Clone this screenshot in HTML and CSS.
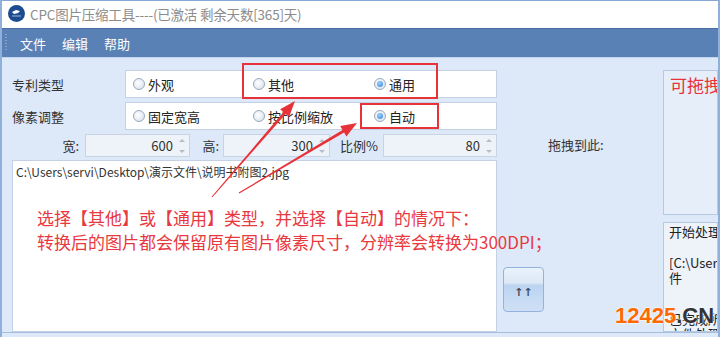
FILE: index.html
```html
<!DOCTYPE html>
<html lang="zh-CN">
<head>
    <meta charset="UTF-8">
    <title>CPC图片压缩工具</title>
    <link rel="stylesheet" href="styles.css">
</head>
<body>
    <div class="window">
        <div class="titlebar">
            <svg class="logo" width="17" height="17" viewBox="0 0 17 17">
                <circle cx="8.5" cy="8.5" r="8.5" fill="#1d4b8f"/>
                <path d="M4 7 L8 5 L12 6 L10 8 L6 9 Z" fill="#fff"/>
                <rect x="4" y="10.5" width="9" height="1" fill="#9fb8dd"/>
            </svg>
            <span class="title">CPC图片压缩工具----(已激活 剩余天数[365]天)</span>
        </div>
        <div class="menubar">
            <span class="grip"></span>
            <span class="menu">文件</span>
            <span class="menu">编辑</span>
            <span class="menu">帮助</span>
        </div>
        <div class="main">
            <div class="left">
                <div class="row">
                    <span class="label">专利类型</span>
                    <div class="group">
                        <label class="opt"><i class="radio"></i>外观</label>
                        <label class="opt"><i class="radio"></i>其他</label>
                        <label class="opt"><i class="radio on"></i>通用</label>
                    </div>
                </div>
                <div class="row">
                    <span class="label">像素调整</span>
                    <div class="group">
                        <label class="opt"><i class="radio"></i>固定宽高</label>
                        <label class="opt"><i class="radio"></i>按比例缩放</label>
                        <label class="opt"><i class="radio on"></i>自动</label>
                    </div>
                </div>
                <div class="sizes">
                    <span class="slabel w1">宽:</span>
                    <div class="spin s1">600<span class="arrows"></span></div>
                    <span class="slabel w2">高:</span>
                    <div class="spin s2">300<span class="arrows"></span></div>
                    <span class="slabel w3">比例%</span>
                    <div class="spin s3">80<span class="arrows"></span></div>
                </div>
                <div class="pathbox">C:\Users\servi\Desktop\演示文件\说明书附图2.jpg</div>
            </div>
            <div class="middle">
                <span class="drop-label">拖拽到此:</span>
                <button class="up">↑↑</button>
            </div>
            <div class="right">
                <div class="dropzone">可拖拽图片到此处</div>
                <div class="log">
                    <p>开始处理</p>
                    <p class="gap">[C:\Users\servi\Desktop\演示文</p>
                    <p>件</p>
                    <p class="gap2">已完成所有文件</p>
                    <p>文件处理完毕</p>
                </div>
            </div>
        </div>

        <div class="redbox box1"></div>
        <div class="redbox box2"></div>
        <svg class="pointers" width="720" height="337" viewBox="0 0 720 337">
            <polygon fill="#e8323a" points="209.6,196.7 281.5,112.1 278.1,109.2 293,101 287.1,117 283.7,114.1 210.4,197.3"/>
            <polygon fill="#e8323a" points="236.7,192.6 340.5,129.9 338.2,126 355,123 344.4,136.4 342.1,132.5 237.3,193.4"/>
        </svg>
        <div class="note">
            <p>选择【其他】或【通用】类型，并选择【自动】的情况下：</p>
            <p>转换后的图片都会保留原有图片像素尺寸，分辨率会转换为300DPI；</p>
        </div>
        <div class="watermark"><span class="num">12425</span>.CN</div>
    </div>
</body>
</html>
```

FILE: styles.css
```css
* {
    margin: 0;
    padding: 0;
    box-sizing: border-box;
}
body {
    width: 720px;
    height: 337px;
    overflow: hidden;
    background: #dde9f9;
    font-family: "Noto Sans CJK SC", "DejaVu Sans", sans-serif;
    color: #222;
}
.window {
    position: relative;
    width: 720px;
    height: 337px;
    border-left: 2px solid #8fb0da;
    border-right: 2px solid #8fb0da;
    overflow: hidden;
}
.titlebar {
    height: 28px;
    background: #fff;
    border-top: 1px solid #86a8d4;
    display: flex;
    align-items: center;
    padding-left: 6px;
    padding-bottom: 2px;
}
.title {
    margin-left: 5px;
    font-size: 13.5px;
    color: #8c8c8c;
    letter-spacing: -0.2px;
}
.menubar {
    height: 30px;
    background: #5a81b5;
    border-top: 1px solid #4a70a3;
    border-bottom: 1px solid #c3d6ef;
    display: flex;
    align-items: center;
    padding-left: 3px;
}
.grip {
    width: 2px;
    height: 18px;
    margin-right: 13px;
    background: repeating-linear-gradient(#8aa6cc 0 1px, transparent 1px 3px);
}
.menu {
    color: #fff;
    font-size: 13px;
    margin-right: 16px;
}
.main {
    height: 275px;
    display: grid;
    grid-template-columns: 485px 164px 57px;
    padding: 12px 0 0 10px;
    border-bottom: 1px solid #a5bee0;
}
.left {
    display: flex;
    flex-direction: column;
}
.row {
    display: flex;
    align-items: center;
    height: 28px;
    margin-bottom: 4px;
}
.label {
    width: 113px;
    font-size: 13px;
    color: #333;
}
.group {
    flex: 1;
    height: 28px;
    background: #fff;
    border: 1px solid #c3d1e3;
    display: grid;
    grid-template-columns: 120px 121px 1fr;
    align-items: center;
}
.opt {
    display: flex;
    align-items: center;
    padding-left: 7px;
    font-size: 13px;
    color: #222;
}
.radio {
    width: 12px;
    height: 12px;
    border-radius: 50%;
    border: 1px solid #9aa9bb;
    background: radial-gradient(circle at 40% 40%, #fff, #d3dfec);
    margin-right: 3px;
    position: relative;
}
.radio.on::after {
    content: '';
    position: absolute;
    left: 2px;
    top: 2px;
    width: 6px;
    height: 6px;
    border-radius: 50%;
    background: radial-gradient(circle at 40% 35%, #9fd0ff, #2f7fd6);
}
.sizes {
    display: flex;
    align-items: center;
    height: 23px;
    margin-bottom: 3px;
}
.slabel {
    font-size: 13px;
    color: #333;
    text-align: right;
}
.w1 { width: 73px; padding-right: 6px; }
.w2 { width: 33px; padding-right: 4px; }
.w3 { width: 53px; padding-right: 5px; }
.spin {
    height: 23px;
    background: #eef3f9;
    border: 1px solid #c8d4e3;
    display: flex;
    align-items: center;
    justify-content: flex-end;
    font-size: 13px;
    color: #333;
}
.s1 { width: 105px; }
.s2 { width: 107px; }
.s3 { width: 114px; }
.arrows {
    width: 8px;
    height: 14px;
    margin: 0 3px 0 5px;
    display: flex;
    flex-direction: column;
    justify-content: space-between;
    align-items: center;
}
.arrows::before,
.arrows::after {
    content: '';
    width: 0;
    height: 0;
    border-left: 3px solid transparent;
    border-right: 3px solid transparent;
}
.arrows::before {
    border-bottom: 3px solid #b3bdca;
}
.arrows::after {
    border-top: 3px solid #b3bdca;
}
.pathbox {
    flex: 1;
    background: #fff;
    border: 1px solid #c3d1e3;
    padding: 2px 3px;
    font-size: 12px;
    color: #333;
}
.middle {
    display: flex;
    flex-direction: column;
    align-items: flex-start;
    padding: 65px 0 0 6px;
}
.drop-label {
    margin-left: 45px;
    font-size: 13px;
    color: #333;
}
.up {
    margin-top: 113px;
    width: 41px;
    height: 45px;
    border: 1px solid #93b3da;
    border-radius: 4px;
    background: linear-gradient(#eaf2fc 0, #dce8f6 35%, #bcd4f1 40%, #cfe0f5 100%);
    color: #3d4a5c;
    font-size: 11px;
    font-weight: bold;
    padding-top: 6px;
    font-family: "DejaVu Sans", sans-serif;
}
.right {
    display: flex;
    flex-direction: column;
    padding-left: 2px;
    overflow: hidden;
}
.dropzone {
    height: 145px;
    flex-shrink: 0;
    background: #e6eef9;
    border: 1px solid #b7c9e1;
    padding: 2px 0 0 6px;
    font-size: 17px;
    line-height: 24px;
    color: #e8323a;
    white-space: nowrap;
    overflow: hidden;
}
.log {
    flex: 1;
    margin-top: 7px;
    background: #eef3fa;
    border: 1px solid #b7c9e1;
    padding: 1px 0 0 5px;
    font-size: 13px;
    color: #222;
    overflow: hidden;
    line-height: 15px;
    white-space: nowrap;
}
.log .gap {
    margin-top: 16px;
}
.log .gap2 {
    margin-top: 26px;
}
.redbox {
    position: absolute;
    border: 2px solid #e8323a;
}
.box1 {
    left: 240px;
    top: 63px;
    width: 196px;
    height: 36px;
}
.box2 {
    left: 358px;
    top: 103px;
    width: 79px;
    height: 26px;
}
.pointers {
    position: absolute;
    left: 0;
    top: 0;
}
.note {
    position: absolute;
    left: 35px;
    top: 206px;
    font-size: 17px;
    line-height: 24px;
    color: #e8393e;
    white-space: nowrap;
}
.watermark {
    position: absolute;
    left: 613px;
    top: 303px;
    font-family: "Liberation Sans", Arial, sans-serif;
    font-weight: bold;
    font-size: 22px;
    color: #333;
    text-shadow: 0 0 2px #fff, 0 0 2px #fff;
}
.watermark .num {
    color: #ff6a00;
}
```
